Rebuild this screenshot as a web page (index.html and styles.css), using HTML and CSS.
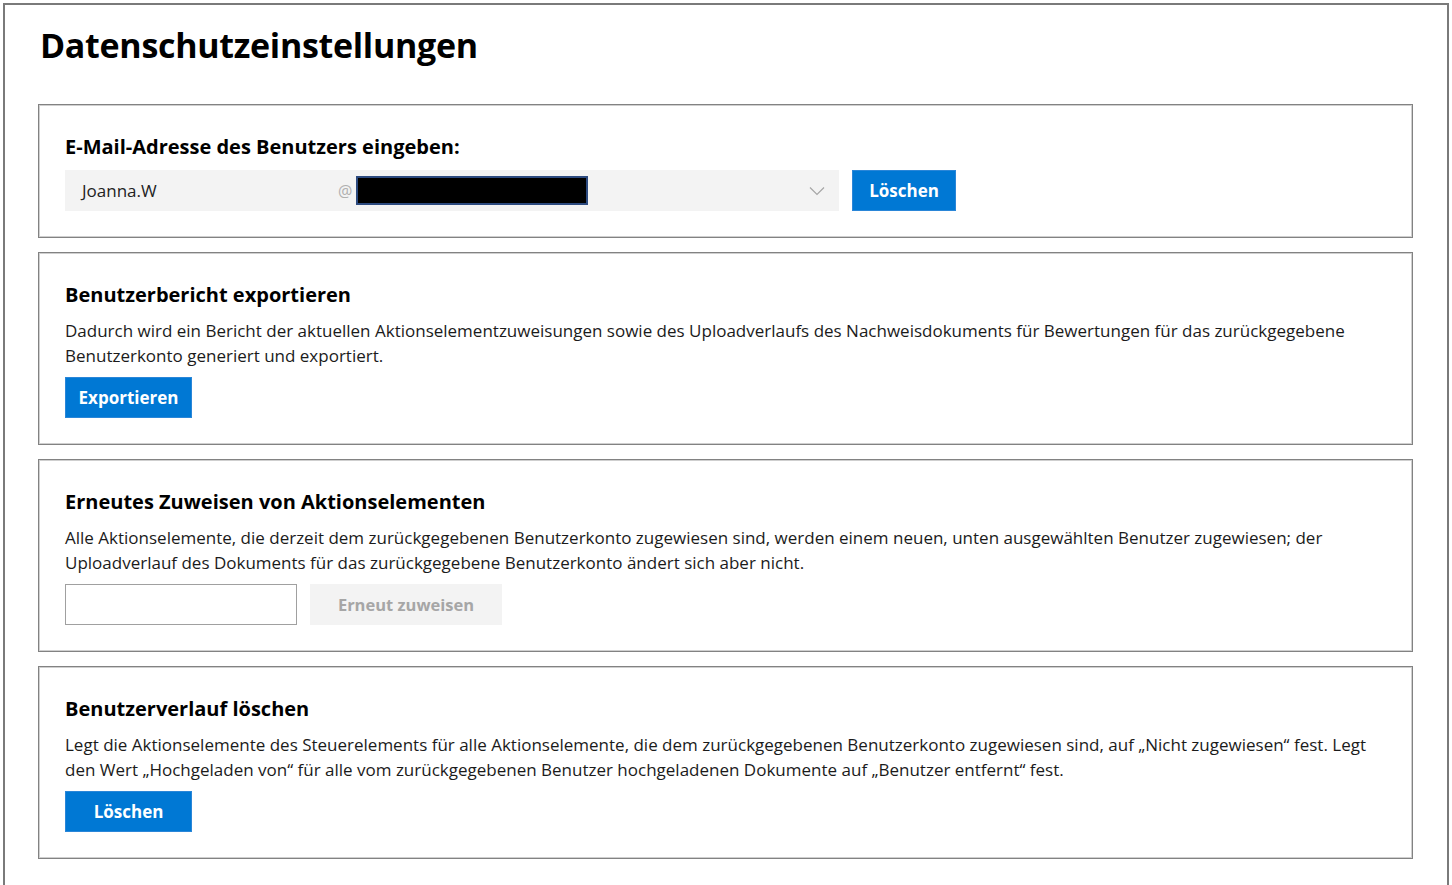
FILE: index.html
```html
<!DOCTYPE html>
<html lang="de">
<head>
<meta charset="utf-8">
<title>Datenschutzeinstellungen</title>
<link rel="stylesheet" href="styles.css">
</head>
<body>
<div class="frame">
  <h1 class="title">Datenschutzeinstellungen</h1>

  <section class="card">
    <h2 class="card-title">E-Mail-Adresse des Benutzers eingeben:</h2>
    <div class="row">
      <div class="email">
        <span class="email-user">Joanna.W</span>
        <span class="email-at">@</span>
        <span class="email-domain"></span>
        <svg class="chevron" width="16" height="10" viewBox="0 0 16 10"><path d="M1 1.5 L8 8.5 L15 1.5" fill="none" stroke="#a6a6a6" stroke-width="1.2"/></svg>
      </div>
      <button class="btn btn-primary btn-clear">Löschen</button>
    </div>
  </section>

  <section class="card">
    <h2 class="card-title">Benutzerbericht exportieren</h2>
    <p class="card-text">Dadurch wird ein Bericht der aktuellen Aktionselementzuweisungen sowie des Uploadverlaufs des Nachweisdokuments für Bewertungen für das zurückgegebene Benutzerkonto generiert und exportiert.</p>
    <div class="row">
      <button class="btn btn-primary btn-wide">Exportieren</button>
    </div>
  </section>

  <section class="card">
    <h2 class="card-title">Erneutes Zuweisen von Aktionselementen</h2>
    <p class="card-text">Alle Aktionselemente, die derzeit dem zurückgegebenen Benutzerkonto zugewiesen sind, werden einem neuen, unten ausgewählten Benutzer zugewiesen; der Uploadverlauf des Dokuments für das zurückgegebene Benutzerkonto ändert sich aber nicht.</p>
    <div class="row">
      <input class="text-input" type="text">
      <button class="btn btn-disabled" disabled>Erneut zuweisen</button>
    </div>
  </section>

  <section class="card">
    <h2 class="card-title">Benutzerverlauf löschen</h2>
    <p class="card-text">Legt die Aktionselemente des Steuerelements für alle Aktionselemente, die dem zurückgegebenen Benutzerkonto zugewiesen sind, auf „Nicht zugewiesen“ fest. Legt den Wert „Hochgeladen von“ für alle vom zurückgegebenen Benutzer hochgeladenen Dokumente auf „Benutzer entfernt“ fest.</p>
    <div class="row">
      <button class="btn btn-primary btn-wide">Löschen</button>
    </div>
  </section>
</div>
</body>
</html>
```

FILE: styles.css
```css
* { box-sizing: border-box; }

html, body {
  margin: 0;
  padding: 0;
  background: #ffffff;
  overflow: hidden;
}

body {
  font-family: "Segoe UI", "Open Sans", "Noto Sans", sans-serif;
  color: #000;
}

.frame {
  margin: 3px 3px 0 3px;
  height: 900px;
  border: 2px solid #7a7a7a;
  border-bottom: none;
  padding: 0 34px 0 33px;
  display: flex;
  flex-direction: column;
  gap: 14px;
}

.title {
  margin: 17px 0 22px 2px;
  font-size: 34px;
  line-height: 46px;
  font-weight: 700;
  letter-spacing: -0.3px;
}

.card {
  border: 1px solid #828282;
  box-shadow: inset 0 0 0 1px #cfcfcf;
  padding: 28px 27px 26px 26px;
  display: flex;
  flex-direction: column;
}

.card-title {
  margin: 0;
  font-size: 20px;
  line-height: 28px;
  font-weight: 700;
}

.card-text {
  margin: 9px 0 9px 0;
  font-size: 17px;
  line-height: 25px;
  color: #1b1b1b;
}

.card-title + .row { margin-top: 9px; }

.row {
  display: flex;
  align-items: stretch;
  gap: 13px;
  height: 41px;
}

.email {
  width: 774px;
  background: #f3f3f3;
  display: flex;
  align-items: center;
  position: relative;
  padding-left: 17px;
}

.email-user {
  width: 256px;
  font-size: 17px;
  color: #222;
}

.email-at {
  font-size: 16px;
  color: #b0b0b0;
  width: 18px;
}

.email-domain {
  width: 232px;
  height: 29px;
  background: #000;
  border: 2px solid #2c4a7f;
}

.chevron {
  margin-left: auto;
  margin-right: 14px;
}

.btn {
  font-family: inherit;
  font-size: 17px;
  font-weight: 700;
  border: none;
  padding: 0;
  cursor: pointer;
}

.btn-primary {
  background: #0078d4;
  color: #fff;
  border: 1px solid #2a86d8;
}

.btn-clear { width: 104px; }
.btn-wide { width: 127px; }

.text-input {
  width: 232px;
  border: 1px solid #a0a0a0;
  background: #fff;
  margin: 0;
}

.btn-disabled {
  width: 192px;
  background: #f3f3f3;
  color: #a6a6a6;
  cursor: default;
  font-size: 16.5px;
}
```
